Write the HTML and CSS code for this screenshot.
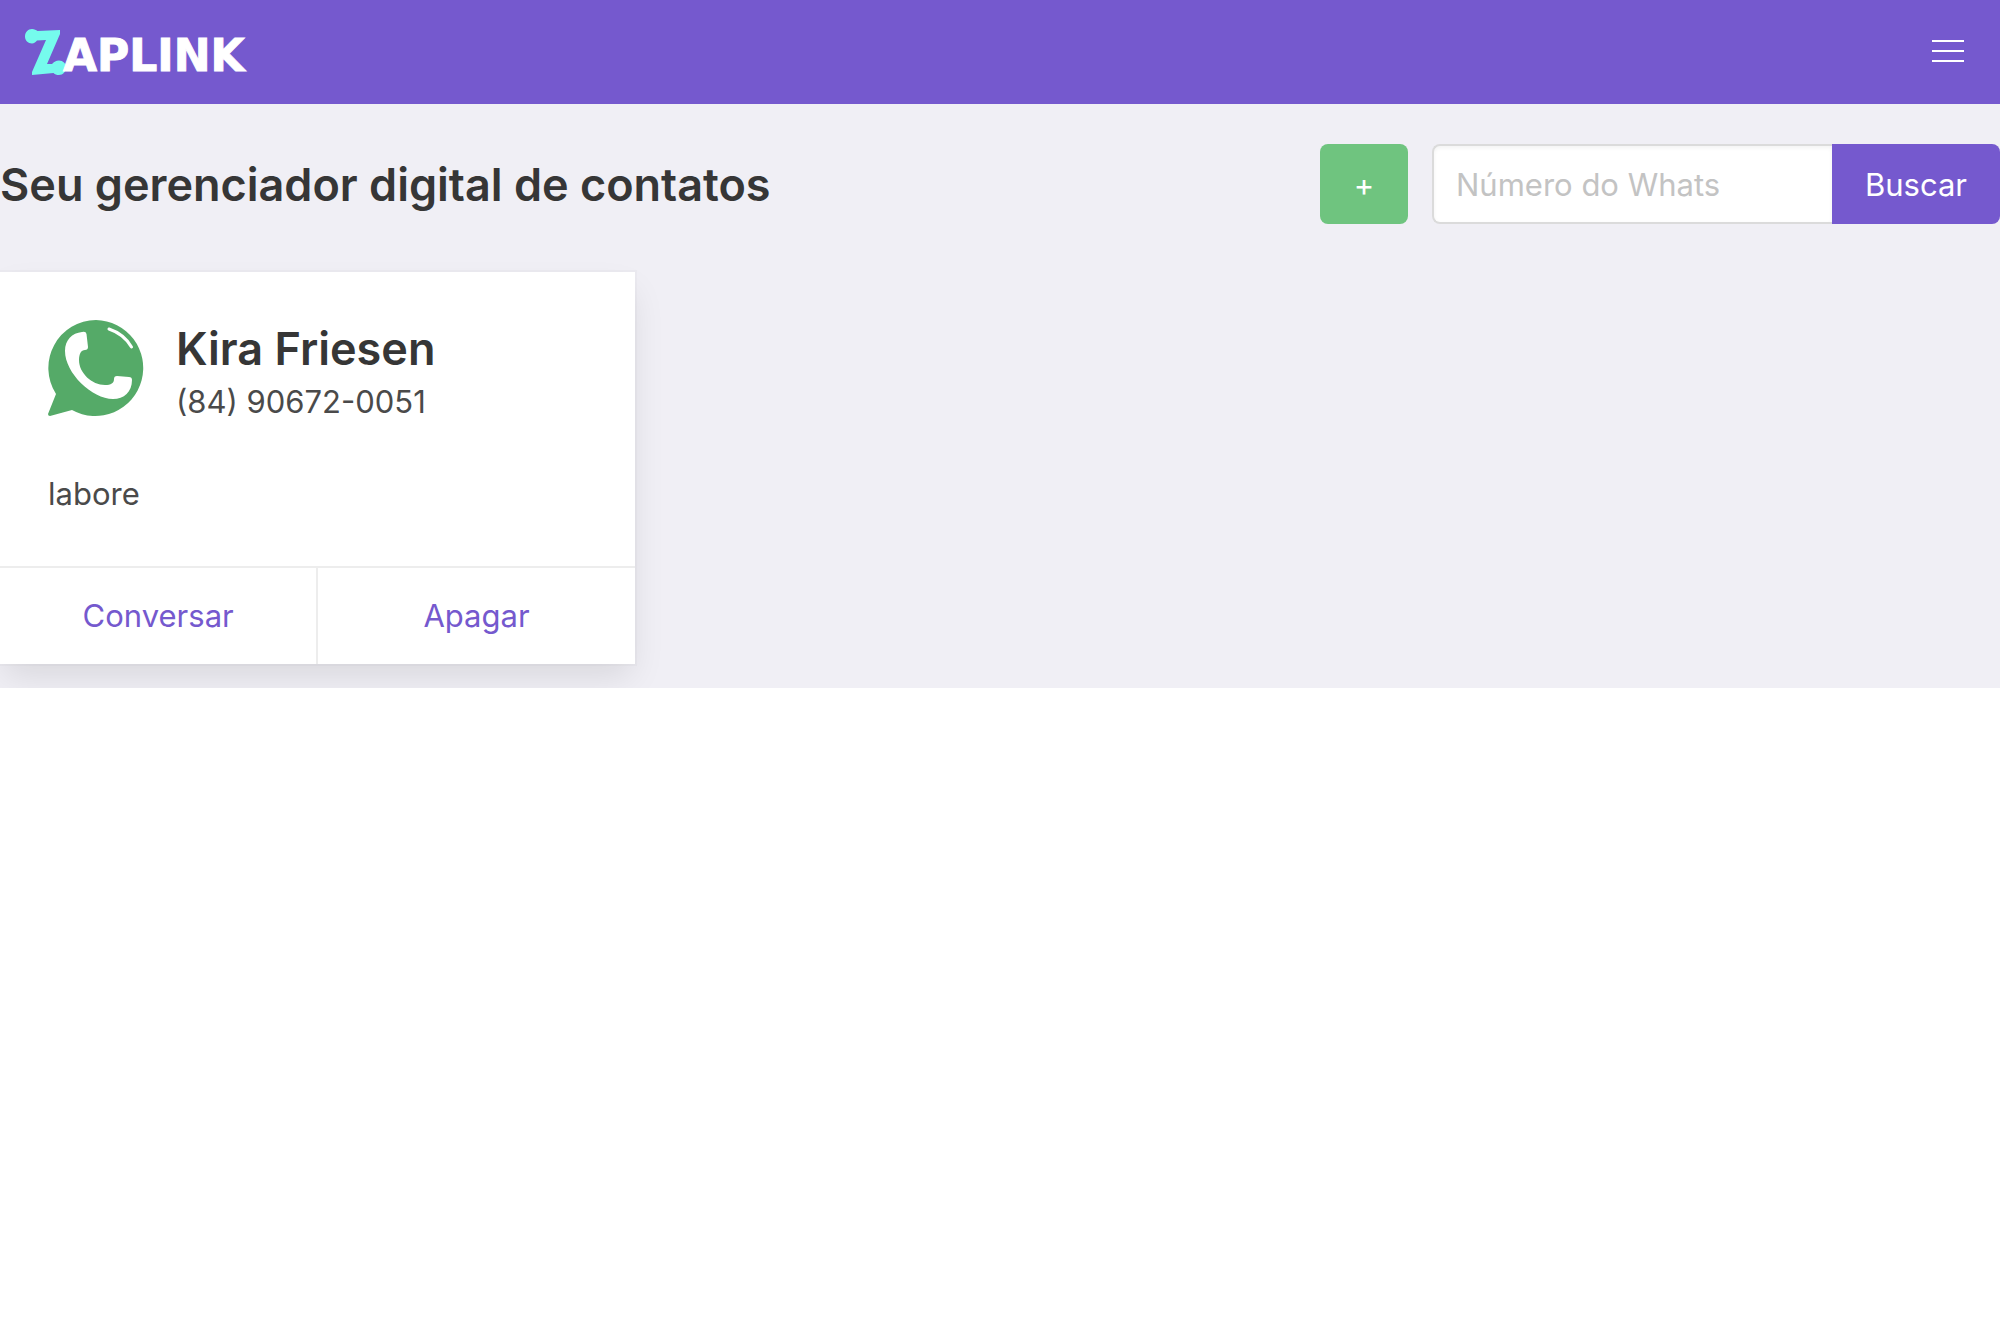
FILE: index.html
```html
<!DOCTYPE html>
<html lang="pt-BR">
<head>
  <meta charset="utf-8">
  <meta name="viewport" content="width=device-width, initial-scale=1">
  <title>Zaplink</title>
  <link rel="stylesheet" href="styles.css">
</head>
<body>
  <header class="navbar">
    <a class="brand" href="#" aria-label="Zaplink">
      <svg class="brand-mark" width="44" height="48" viewBox="0 0 44 48" aria-hidden="true">
        <path d="M7 3C9.500 3 11 4 12.500 5L35 4V8L22 38H27C29 36 31 34.500 34 34.500C38 34.500 41 37.500 41 41.500C41 45.500 38 49 34 49C31.500 49 30 48.500 28.500 47L7 49V46L21 14L12 14.500C11 16 9 17.500 7 17.500C3 17.500 0 14.500 0 10.500C0 6.200 3 3 7 3Z" transform="translate(0 -2)"/>
      </svg>
      <span class="brand-name">APLINK</span>
    </a>
    <button class="burger" type="button" aria-label="Menu">
      <svg width="32" height="22" viewBox="0 0 32 22" aria-hidden="true">
        <path d="M0 0H32V2H0ZM0 10H32V12H0ZM0 20H32V22H0Z"/>
      </svg>
    </button>
  </header>

  <main class="page">
    <div class="toolbar">
      <h1 class="title">Seu gerenciador digital de contatos</h1>
      <form class="actions">
        <button class="button button-add" type="button" aria-label="Adicionar contato">+</button>
        <div class="search">
          <input class="input" type="text" placeholder="Número do Whats" aria-label="Número do Whats">
          <button class="button button-search" type="submit">Buscar</button>
        </div>
      </form>
    </div>

    <section class="contacts">
      <article class="card">
        <div class="card-body">
          <div class="media">
            <svg class="avatar" width="96" height="96" viewBox="0 0 96 96" aria-hidden="true">
              <path class="bubble" d="M48 0A48 48 0 1 1 24 90L2 96Q0 96 0 94L8 74A48 48 0 0 1 48 0Z"/>
              <path class="phone" d="M34 12Q38 11 38.500 14L40 27Q40 30 37 30C33 30 31 34 31 40C31 53 44 65 57 65C63 65 66 63 66 59Q66 56 69 56L81 57Q84 57 84 60C84 72 76 79 65 79C44 79 17 53 17 31C17 20 24 13 34 12Z"/>
              <path class="shine" d="M61 9Q76 14 83.500 27"/>
            </svg>
            <div class="media-text">
              <h2 class="title">Kira Friesen</h2>
              <p class="phone-number">(84) 90672-0051</p>
            </div>
          </div>
          <p class="description">labore</p>
        </div>
        <footer class="card-footer">
          <a class="card-action" href="#">Conversar</a>
          <a class="card-action" href="#">Apagar</a>
        </footer>
      </article>
    </section>
  </main>
</body>
</html>
```

FILE: styles.css
```css
* {
  box-sizing: border-box;
}

body {
  margin: 0;
  background: #fff;
  color: #4a4a4a;
  font-family: Inter, "Liberation Sans", sans-serif;
  font-size: 31px;
  line-height: 48px;
}

h1, h2, p {
  margin: 0;
}

a {
  color: #7559ce;
  text-decoration: none;
}

.navbar {
  display: flex;
  align-items: center;
  justify-content: space-between;
  height: 104px;
  padding-left: 25px;
  background: #7559ce;
}

.brand {
  display: flex;
  align-items: center;
  color: #fff;
}

.brand-mark {
  display: block;
  margin-right: -6px;
  fill: #75fbed;
}

.brand-name {
  padding-top: 8px;
  font-family: "DejaVu Sans", sans-serif;
  font-size: 44px;
  font-weight: 700;
  -webkit-text-stroke: 1px #fff;
}

.burger {
  display: flex;
  align-items: center;
  justify-content: center;
  width: 104px;
  height: 102px;
  align-self: flex-start;
  padding: 0;
  border: 0;
  background: none;
  fill: #fff;
}

.page {
  padding: 40px 0 24px;
  background: #f0eff5;
}

.toolbar {
  display: flex;
  align-items: center;
  justify-content: space-between;
  margin-bottom: 48px;
}

.title {
  padding-top: 2px;
  color: #363636;
  font-size: 45px;
  font-weight: 600;
  line-height: 54px;
}

.actions {
  display: flex;
  gap: 24px;
}

.search {
  display: flex;
}

.button {
  height: 80px;
  padding: 2px 32px 0;
  border: 0;
  border-radius: 8px;
  color: #fff;
  font: inherit;
}

.button-add {
  width: 88px;
  background: #6fc47f;
}

.button-search {
  width: 168px;
  border-radius: 0 8px 8px 0;
  background: #7559ce;
}

.input {
  width: 400px;
  height: 80px;
  padding: 0 22px;
  border: 2px solid #dbdbdb;
  border-right: 0;
  border-radius: 8px 0 0 8px;
  background: #fff;
  box-shadow: inset 0 2px 4px rgba(10, 10, 10, 0.05);
  color: #363636;
  font: inherit;
}

.input::placeholder {
  color: #c3c3c3;
  opacity: 1;
}

.contacts {
  display: grid;
  grid-template-columns: repeat(3, 1fr);
  gap: 48px;
}

.card {
  background: #fff;
  box-shadow: 0 16px 32px -4px rgba(10, 10, 10, 0.1), 0 0 0 2px rgba(10, 10, 10, 0.02);
}

.card-body {
  padding: 48px;
}

.media {
  display: flex;
  gap: 32px;
  margin-bottom: 48px;
}

.avatar {
  flex: none;
}

.bubble {
  fill: #55aa68;
}

.phone {
  fill: #fff;
}

.shine {
  fill: none;
  stroke: #fff;
  stroke-linecap: round;
  stroke-width: 3;
}

.phone-number {
  margin-top: 6px;
  line-height: 40px;
}

.card-footer {
  display: flex;
  border-top: 2px solid #ededed;
}

.card-action {
  flex: 1;
  padding: 24px;
  text-align: center;
}

.card-action + .card-action {
  border-left: 2px solid #ededed;
}
```
